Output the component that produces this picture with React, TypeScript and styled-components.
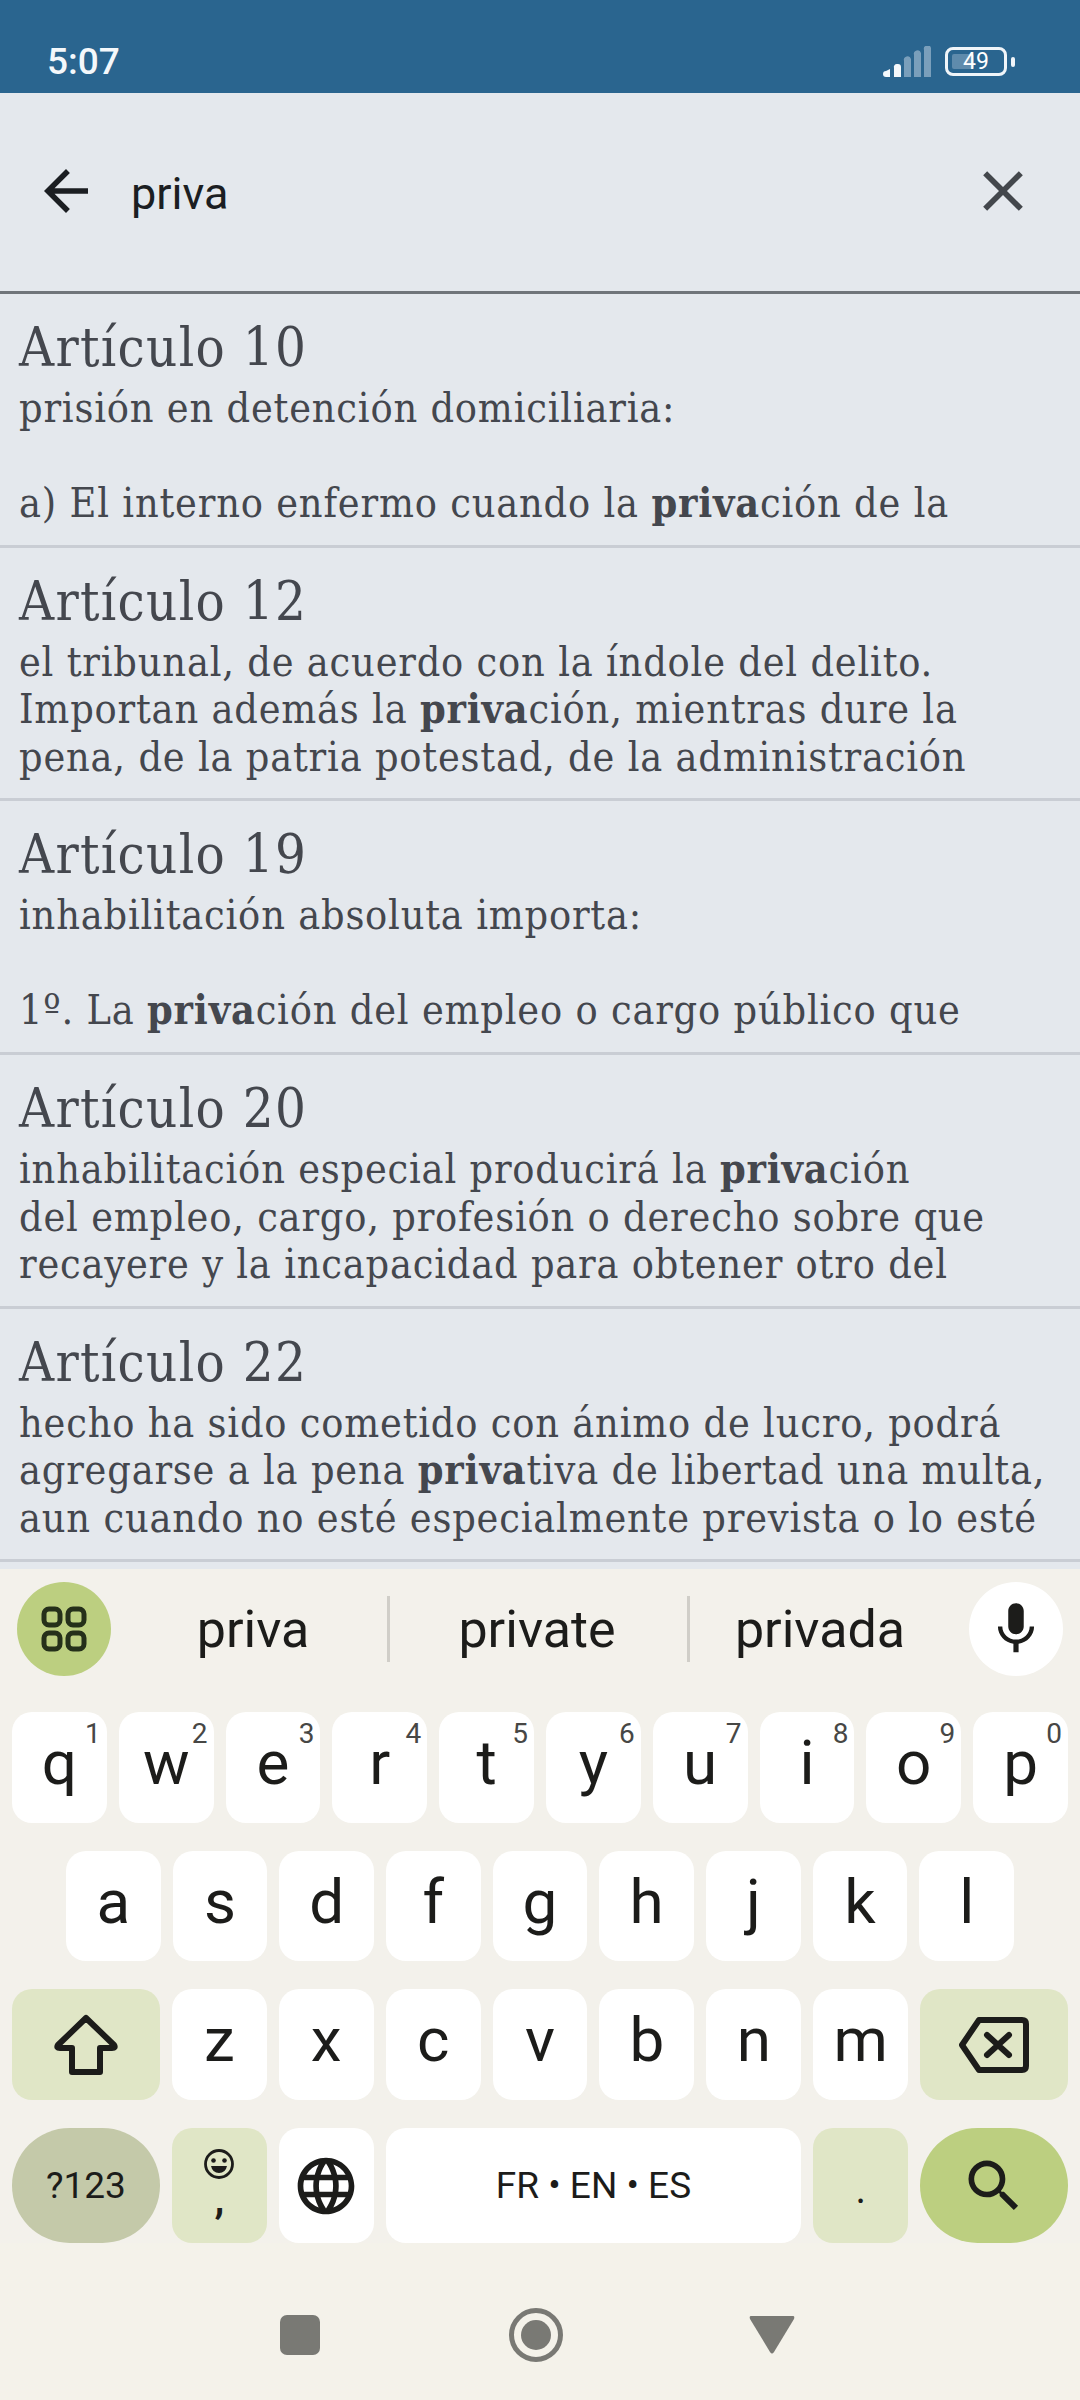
import { ReactNode } from 'react';
import styled, { createGlobalStyle } from 'styled-components';
import { MdArrowBack, MdClose, MdLanguage, MdMic, MdSearch } from 'react-icons/md';

const GlobalStyle = createGlobalStyle`
  html, body {
    margin: 0;
    padding: 0;
    background: #f3f1eb;
  }
  * {
    box-sizing: border-box;
  }
`;

const Screen = styled.div`
  width: 1080px;
  height: 2400px;
  display: flex;
  flex-direction: column;
  overflow: hidden;
  background: #e4e8ed;
  font-family: Roboto, 'Liberation Sans', sans-serif;
`;

const StatusBar = styled.div`
  height: 93px;
  flex: none;
  padding: 30px 73px 0 47px;
  display: flex;
  justify-content: space-between;
  align-items: center;
  background: #2a658f;
  color: #f4f8fb;
`;

const Clock = styled.span`
  font-size: 37px;
  font-weight: 500;
`;

const StatusIcons = styled.div`
  display: flex;
  align-items: center;
  gap: 14px;
`;

const Battery = styled.div`
  position: relative;
  width: 62px;
  height: 29px;
  border: 3px solid #f0f5f9;
  border-radius: 8px;
  display: flex;
  align-items: center;
  justify-content: center;
  font-size: 23px;
  color: #fff;

  &::before {
    content: '';
    position: absolute;
    left: 4px;
    top: 4px;
    bottom: 4px;
    width: 22px;
    border-radius: 2px;
    background: #5f8bac;
  }

  &::after {
    content: '';
    position: absolute;
    right: -11px;
    top: 7px;
    width: 4px;
    height: 10px;
    border-radius: 2px;
    background: #f0f5f9;
  }

  span {
    position: relative;
  }
`;

const SearchBar = styled.div`
  height: 201px;
  flex: none;
  padding: 0 43px 2px 33px;
  display: flex;
  align-items: center;
  border-bottom: 3px solid #70757a;
  color: #1b1e22;
`;

const Query = styled.span`
  flex: 1;
  margin-left: 32px;
  padding-top: 5px;
  font-size: 45px;
`;

const ClearIcon = styled(MdClose)`
  color: #43474c;
`;

const Results = styled.div`
  height: 1275px;
  flex: none;
`;

const Result = styled.div`
  height: 253.7px;
  padding: 20px 19px 0;
  border-bottom: 3px solid #c9cdd4;
  font-family: 'DejaVu Serif', 'Liberation Serif', serif;
  font-stretch: condensed;
  color: #44474e;
  white-space: nowrap;
`;

const Title = styled.div`
  height: 71px;
  font-size: 54px;
  letter-spacing: 1.3px;
  line-height: 68px;
`;

const Line = styled.div`
  height: 47.5px;
  font-size: 41px;
  letter-spacing: 0.8px;
  line-height: 47.5px;
`;

const Keyboard = styled.div`
  flex: 1;
  display: flex;
  flex-direction: column;
  background: #f3f1eb;
  color: #1c1c1a;
`;

const Strip = styled.div`
  height: 143px;
  flex: none;
  padding: 13px 17px 0;
  display: flex;
  align-items: flex-start;
`;

const RoundButton = styled.div<{ $bg: string }>`
  width: 94px;
  height: 94px;
  flex: none;
  border-radius: 50%;
  display: flex;
  align-items: center;
  justify-content: center;
  background: ${(p) => p.$bg};
`;

const Suggestions = styled.div`
  flex: 1;
  height: 94px;
  display: grid;
  grid-template-columns: 276px 300px 1fr;
  align-items: center;
`;

const Suggestion = styled.div<{ $divider?: boolean; $left?: number; $right?: number }>`
  height: 66px;
  display: flex;
  align-items: center;
  justify-content: center;
  font-size: 52px;
  padding: 0 ${(p) => p.$right ?? 0}px 0 ${(p) => p.$left ?? 0}px;
  border-left: ${(p) => (p.$divider ? '3px solid #d0cec8' : '0')};
`;

const Rows = styled.div`
  padding: 0 12px;
  display: flex;
  flex-direction: column;
  gap: 28px;
`;

const Row = styled.div<{ $h: number; $inset?: number }>`
  height: ${(p) => p.$h}px;
  padding: 0 ${(p) => p.$inset ?? 0}px;
  display: flex;
  gap: 12px;
`;

const tones = {
  plain: '#ffffff',
  soft: '#e0e6c6',
  muted: '#c4c9a9',
  accent: '#bccf80',
};

const Key = styled.div<{ $tone?: keyof typeof tones; $w?: number; $pill?: boolean }>`
  position: relative;
  flex: ${(p) => (p.$w ? `${p.$w} ${p.$w} 0` : '1 1 0')};
  min-width: 0;
  display: flex;
  align-items: center;
  justify-content: center;
  padding-bottom: 10px;
  border-radius: ${(p) => (p.$pill ? '58px' : '20px')};
  background: ${(p) => tones[p.$tone ?? 'plain']};
  font-size: 62px;
`;

const Hint = styled.span`
  position: absolute;
  top: 5px;
  right: 6px;
  font-size: 28px;
  color: #474745;
`;

const LabelKey = styled(Key)`
  padding-bottom: 0;
  font-size: 37px;
`;

const PeriodKey = styled(LabelKey)`
  padding-top: 8px;
  font-size: 40px;
`;

const EmojiKey = styled(Key)`
  flex-direction: column;
  justify-content: flex-start;
  padding: 20px 0 0;
  font-size: 40px;
  font-weight: 700;
  line-height: 40px;
`;

const NavBar = styled.div`
  flex: 1;
  padding: 27px 8px 0 0;
  display: flex;
  align-items: center;
  justify-content: center;
  background: #f4f2ea;
`;

const NavSlot = styled.div`
  width: 236px;
  display: flex;
  justify-content: center;
`;

const Signal = () => (
  <svg width="48" height="31" viewBox="0 0 48 31">
    <path d="M0 28a3 3 0 0 1 3-3l4-2v8H3a3 3 0 0 1-3-3z" fill="#f4f8fb" />
    <path d="M11 22a3 3 0 0 1 3-4h1a3 3 0 0 1 3 3v10h-7z" fill="#f4f8fb" />
    <g fill="#7a9fbb">
      <path d="M21 15a3.500 3.500 0 0 1 7 -2v18h-7z" />
      <path d="M31 9a3.500 3.500 0 0 1 7 -2v24h-7z" />
      <path d="M41 4a3.500 3.500 0 0 1 7 -2v29h-7z" />
    </g>
  </svg>
);

const GridIcon = () => (
  <svg width="46" height="46" viewBox="0 0 46 46" fill="none" stroke="#25301a" strokeWidth="5">
    <rect x="3" y="3" width="16" height="16" rx="5" />
    <rect x="27" y="3" width="16" height="16" rx="5" />
    <rect x="3" y="27" width="16" height="16" rx="5" />
    <rect x="27" y="27" width="16" height="16" rx="5" />
  </svg>
);

const ShiftIcon = () => (
  <svg width="64" height="62" viewBox="0 0 64 62" fill="none" stroke="#1c1c1a" strokeWidth="6" strokeLinejoin="round">
    <path d="M32 4 L60 31 Q62 34 58 34 H46 V58 H18 V34 H6 Q2 34 4 31 Z" />
  </svg>
);

const DeleteIcon = () => (
  <svg width="70" height="56" viewBox="0 0 70 56" fill="none" stroke="#1c1c1a" strokeWidth="6" strokeLinejoin="round">
    <path d="M20 3 H63 Q67 3 67 7 V49 Q67 53 63 53 H20 L3 28 Z" />
    <path d="M28 18 L50 38 M50 18 L28 38" strokeLinecap="round" />
  </svg>
);

const SmileIcon = () => (
  <svg width="32" height="32" viewBox="0 0 32 32">
    <circle cx="16" cy="16" r="13.500" fill="none" stroke="#1c1c1a" strokeWidth="2.800" />
    <circle cx="10.500" cy="12.500" r="2.300" fill="#1c1c1a" />
    <circle cx="21.500" cy="12.500" r="2.300" fill="#1c1c1a" />
    <path d="M8 18 H24 Q22.500 25 16 25 Q9.500 25 8 18 Z" fill="#1c1c1a" />
  </svg>
);

const highlight = (text: string): ReactNode => {
  const at = text.indexOf('priva');
  if (at < 0) return text;
  return (
    <>
      {text.slice(0, at)}
      <b>priva</b>
      {text.slice(at + 5)}
    </>
  );
};

const results = [
  {
    title: 'Artículo 10',
    lines: ['prisión en detención domiciliaria:', '', 'a) El interno enfermo cuando la privación de la'],
  },
  {
    title: 'Artículo 12',
    lines: [
      'el tribunal, de acuerdo con la índole del delito.',
      'Importan además la privación, mientras dure la',
      'pena, de la patria potestad, de la administración',
    ],
  },
  {
    title: 'Artículo 19',
    lines: ['inhabilitación absoluta importa:', '', '1º. La privación del empleo o cargo público que'],
  },
  {
    title: 'Artículo 20',
    lines: [
      'inhabilitación especial producirá la privación',
      'del empleo, cargo, profesión o derecho sobre que',
      'recayere y la incapacidad para obtener otro del',
    ],
  },
  {
    title: 'Artículo 22',
    lines: [
      'hecho ha sido cometido con ánimo de lucro, podrá',
      'agregarse a la pena privativa de libertad una multa,',
      'aun cuando no esté especialmente prevista o lo esté',
    ],
  },
];

const topRow = [
  ['q', '1'],
  ['w', '2'],
  ['e', '3'],
  ['r', '4'],
  ['t', '5'],
  ['y', '6'],
  ['u', '7'],
  ['i', '8'],
  ['o', '9'],
  ['p', '0'],
];

const App = () => (
  <Screen>
    <GlobalStyle />
    <StatusBar>
      <Clock>5:07</Clock>
      <StatusIcons>
        <Signal />
        <Battery>
          <span>49</span>
        </Battery>
      </StatusIcons>
    </StatusBar>

    <SearchBar>
      <MdArrowBack size={66} />
      <Query>priva</Query>
      <ClearIcon size={68} />
    </SearchBar>

    <Results>
      {results.map((r) => (
        <Result key={r.title}>
          <Title>{r.title}</Title>
          {r.lines.map((l, i) => (
            <Line key={i}>{highlight(l)}</Line>
          ))}
        </Result>
      ))}
    </Results>

    <Keyboard>
      <Strip>
        <RoundButton $bg="#bccf80">
          <GridIcon />
        </RoundButton>
        <Suggestions>
          <Suggestion $left={8}>priva</Suggestion>
          <Suggestion $divider $right={3}>
            private
          </Suggestion>
          <Suggestion $divider $right={19}>
            privada
          </Suggestion>
        </Suggestions>
        <RoundButton $bg="#ffffff">
          <MdMic size={62} />
        </RoundButton>
      </Strip>

      <Rows>
        <Row $h={111}>
          {topRow.map(([k, n]) => (
            <Key key={k}>
              {k}
              <Hint>{n}</Hint>
            </Key>
          ))}
        </Row>
        <Row $h={110} $inset={54}>
          {'asdfghjkl'.split('').map((k) => (
            <Key key={k}>{k}</Key>
          ))}
        </Row>
        <Row $h={111}>
          <LabelKey $tone="soft" $w={148}>
            <ShiftIcon />
          </LabelKey>
          {'zxcvbnm'.split('').map((k) => (
            <Key $w={95} key={k}>
              {k}
            </Key>
          ))}
          <LabelKey $tone="soft" $w={148}>
            <DeleteIcon />
          </LabelKey>
        </Row>
        <Row $h={115}>
          <LabelKey $tone="muted" $w={148} $pill>
            ?123
          </LabelKey>
          <EmojiKey $tone="soft" $w={95}>
            <SmileIcon />,
          </EmojiKey>
          <LabelKey $w={95}>
            <MdLanguage size={68} />
          </LabelKey>
          <LabelKey $w={416}>FR • EN • ES</LabelKey>
          <PeriodKey $tone="soft" $w={95}>
            .
          </PeriodKey>
          <LabelKey $tone="accent" $w={148} $pill>
            <MdSearch size={68} />
          </LabelKey>
        </Row>
      </Rows>

      <NavBar>
        <NavSlot>
          <svg width="40" height="40" viewBox="0 0 40 40">
            <rect width="40" height="40" rx="7" fill="#797974" />
          </svg>
        </NavSlot>
        <NavSlot>
          <svg width="54" height="54" viewBox="0 0 54 54">
            <circle cx="27" cy="27" r="24.500" fill="none" stroke="#797974" strokeWidth="5" />
            <circle cx="27" cy="27" r="15" fill="#797974" />
          </svg>
        </NavSlot>
        <NavSlot>
          <svg width="46" height="38" viewBox="0 0 46 38">
            <path d="M2 0 H44 Q46 0 45 3 L25 36 Q23 39 21 36 L1 3 Q0 0 2 0 Z" fill="#797974" />
          </svg>
        </NavSlot>
      </NavBar>
    </Keyboard>
  </Screen>
);

export default App;
